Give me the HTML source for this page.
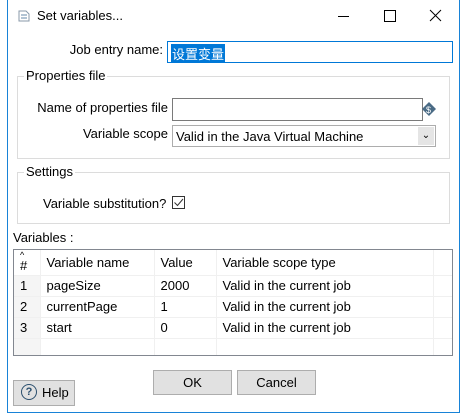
<!DOCTYPE html><html><head><style>
body{margin:0;width:466px;height:420px;background:#fff;position:relative;overflow:hidden;font-family:"Liberation Sans","Noto Sans CJK SC",sans-serif;font-size:13px;color:#000}
.a{position:absolute;white-space:nowrap}
.r{position:absolute;white-space:nowrap;text-align:right}
.win{position:absolute;left:7px;top:0;width:451px;height:412px;border:1px solid #1883d7;border-top:none;background:#fff}
.grp{position:absolute;border:1px solid #dcdcdc}
.leg{position:absolute;background:#fff;padding:0 2px}
.btn{position:absolute;background:#e1e1e1;border:1px solid #adadad;text-align:center;box-sizing:border-box}
table{border-collapse:collapse;table-layout:fixed}
td{height:20px;border-right:1px solid #f0f0f0;border-bottom:1px solid #f0f0f0;padding:0 0 0 6px;font-size:13px;box-sizing:border-box}
</style></head><body>
<div class="win"></div>
<svg class="a" style="left:16px;top:8px" width="16" height="16"><path d="M3 3h7l3 3v7H3z" fill="none" stroke="#8899aa"/><path d="M5 7h6M5 10h6" stroke="#6688aa"/></svg>
<div class="a" style="left:37px;top:8px;font-size:13px">Set variables...</div>
<div class="a" style="left:338px;top:16px;width:11px;height:1px;background:#000"></div>
<div class="a" style="left:384px;top:10px;width:10px;height:10px;border:1px solid #000"></div>
<svg class="a" style="left:429px;top:9px" width="13" height="13"><path d="M1 1L12 12M12 1L1 12" stroke="#000"/></svg>
<div class="r" style="right:303px;top:42px">Job entry name:</div>
<div class="a" style="left:167px;top:41px;width:284px;height:20px;border:1px solid #0078d7"><span style="position:absolute;left:3px;top:2px;background:#0078d7;color:#fff;padding:0 1px">设置变量</span></div>
<div class="grp" style="left:17px;top:76px;width:431px;height:81px"></div>
<div class="leg" style="left:24px;top:68px">Properties file</div>
<div class="r" style="right:298px;top:100px">Name of properties file</div>
<div class="a" style="left:172px;top:98px;width:249px;height:21px;border:1px solid #7a7a7a"></div>
<svg class="a" style="left:422px;top:102px" width="14" height="14"><path d="M7 0L14 7L7 14L0 7z" fill="#4a6b85"/><text x="4" y="11" font-size="9" fill="#fff" font-family="Liberation Sans">$</text></svg>
<div class="r" style="right:298px;top:126px">Variable scope</div>
<div class="a" style="left:172px;top:125px;width:262px;height:20px;border:1px solid #adadad;background:#fff"><span style="position:absolute;left:3px;top:3px">Valid in the Java Virtual Machine</span><span style="position:absolute;right:1px;top:1px;width:16px;height:18px;background:#e5e5e5;text-align:center;font-size:10px;line-height:18px">&#8964;</span></div>
<div class="grp" style="left:17px;top:172px;width:431px;height:50px"></div>
<div class="leg" style="left:24px;top:164px">Settings</div>
<div class="a" style="left:43px;top:196px">Variable substitution?</div>
<div class="a" style="left:172px;top:196px;width:11px;height:11px;border:1px solid #333"><svg width="11" height="11" style="position:absolute;left:0;top:0"><path d="M1.5 5.5L4.5 8.5L10 2" fill="none" stroke="#333"/></svg></div>
<div class="a" style="left:13px;top:230px">Variables :</div>
<div class="a" style="left:13px;top:249px;width:438px;height:105px;border:1px solid #828790;overflow:hidden">
<table style="width:440px">
<tr><td style="width:26px;height:25px;position:relative"><span style="position:absolute;left:6px;top:0px;font-size:9px">^</span><span style="position:relative;top:3px">#</span></td><td style="width:114px">Variable name</td><td style="width:62px">Value</td><td style="width:217px">Variable scope type</td><td style="width:21px"></td></tr>
<tr><td style="background:#f5f5f5;height:21px">1</td><td>pageSize</td><td>2000</td><td>Valid in the current job</td><td></td></tr>
<tr><td style="background:#f5f5f5;height:21px">2</td><td>currentPage</td><td>1</td><td>Valid in the current job</td><td></td></tr>
<tr><td style="background:#f5f5f5;height:21px">3</td><td>start</td><td>0</td><td>Valid in the current job</td><td></td></tr>
<tr><td style="background:#f5f5f5"></td><td></td><td></td><td></td><td></td></tr>
</table></div>
<div class="btn" style="left:153px;top:370px;width:79px;height:25px;line-height:23px">OK</div>
<div class="btn" style="left:237px;top:370px;width:79px;height:25px;line-height:23px">Cancel</div>
<div class="btn" style="left:13px;top:380px;width:62px;height:26px;line-height:24px;text-align:left;padding-left:28px">Help</div>
<div class="a" style="left:21px;top:384px;width:14px;height:14px;border:1.5px solid #2b4f6e;border-radius:50%;text-align:center;font-size:11px;line-height:14px;color:#2b4f6e;font-weight:bold">?</div>
</body></html>
